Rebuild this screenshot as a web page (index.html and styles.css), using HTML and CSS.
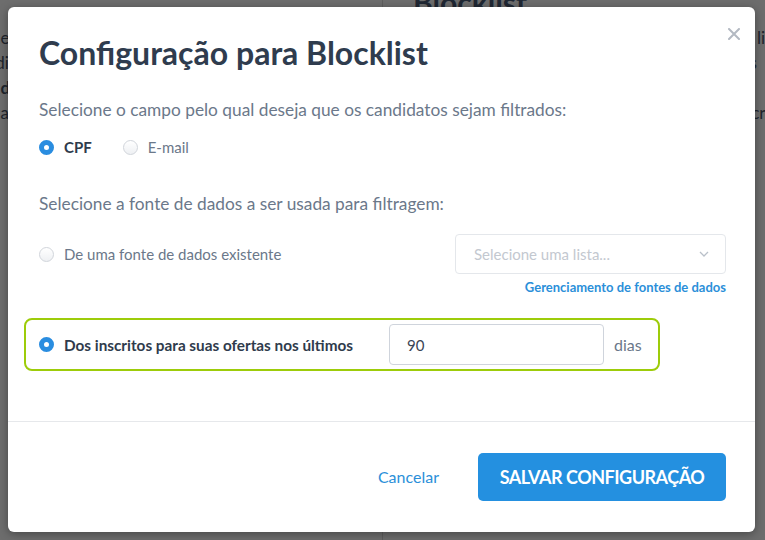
FILE: index.html
```html
<!DOCTYPE html>
<html lang="pt-BR">
<head>
<meta charset="utf-8">
<title>Configuração para Blocklist</title>
<link rel="stylesheet" href="styles.css">
</head>
<body>
<div class="page">
  <div class="page-left">
    <p>Selecione o modelo</p>
    <p>Crie e edite</p>
    <p class="b">Modelo de envio</p>
    <p>Para todas as vagas</p>
  </div>
  <div class="page-right">
    <h2>Blocklist</h2>
    <p>Configurar parâmetros da lista</p>
    <p>Candidatos serão filtrados</p>
    <p class="b">Filtro por regras ativas</p>
    <p>Dos últimos meses de inscrição</p>
  </div>
</div>

<div class="modal">
  <button class="close" aria-label="Fechar">
    <svg width="12" height="12" viewBox="0 0 12 12"><path d="M1 1L11 11M11 1L1 11" stroke="#b3b9c2" stroke-width="2" stroke-linecap="round"/></svg>
  </button>
  <div class="modal-body">
    <h1 class="title">Configuração para Blocklist</h1>

    <p class="lead">Selecione o campo pelo qual deseja que os candidatos sejam filtrados:</p>
    <div class="radio-group">
      <label class="radio checked"><span class="dot"></span><span class="label-text">CPF</span></label>
      <label class="radio"><span class="dot"></span><span class="label-text">E-mail</span></label>
    </div>

    <p class="lead second">Selecione a fonte de dados a ser usada para filtragem:</p>
    <div class="source-row">
      <label class="radio"><span class="dot"></span><span class="label-text">De uma fonte de dados existente</span></label>
      <div class="source-select">
        <div class="select">
          <span class="placeholder">Selecione uma lista...</span>
          <svg class="chevron" width="10" height="6" viewBox="0 0 10 6"><path d="M1 1L5 5L9 1" fill="none" stroke="#b9c0c9" stroke-width="1.3"/></svg>
        </div>
        <a class="manage-link" href="#">Gerenciamento de fontes de dados</a>
      </div>
    </div>

    <div class="highlight">
      <label class="radio checked"><span class="dot"></span><span class="label-text">Dos inscritos para suas ofertas nos últimos</span></label>
      <input class="days-input" type="text" value="90">
      <span class="unit">dias</span>
    </div>
  </div>
  <div class="modal-footer">
    <a class="cancel" href="#">Cancelar</a>
    <button class="save">SALVAR CONFIGURAÇÃO</button>
  </div>
</div>
</body>
</html>
```
FILE: styles.css
```css
* { box-sizing: border-box; }
html, body { margin: 0; padding: 0; }
body {
  width: 765px;
  height: 540px;
  overflow: hidden;
  font-family: Lato, "Noto Sans", sans-serif;
  background: #6d6d6d;
  position: relative;
}

/* dimmed page behind the modal */
.page {
  display: flex;
  height: 540px;
  color: #1e242c;
  font-size: 17px;
}
.page p { margin: 0 0 6px; line-height: 19px; white-space: nowrap; }
.page .b { font-weight: 700; }
.page-left {
  width: 452px;
  margin-left: -70px;
  padding-top: 28px;
  flex-shrink: 0;
}
.page-left p { margin-left: 8px; }
.page-right {
  border-left: 1px solid #5e5e5e;
  padding-left: 30px;
  flex: 1;
}
.page-right h2 {
  margin: -14px 0 10px;
  font-size: 30px;
  line-height: 32px;
  color: #1f2733;
}
.page-right p { margin-left: 150px; }

/* modal */
.modal {
  position: absolute;
  left: 8px;
  top: 7px;
  width: 747px;
  height: 525px;
  background: #fff;
  border-radius: 6px;
  box-shadow: 0 2px 10px rgba(0,0,0,0.35);
  display: flex;
  flex-direction: column;
}
.close {
  position: absolute;
  top: 21px;
  right: 15px;
  width: 12px;
  height: 12px;
  padding: 0;
  border: 0;
  background: none;
  display: flex;
}
.modal-body {
  padding: 27px 29px 0 31px;
  height: 415px;
  border-bottom: 1px solid #e6e8eb;
}
.title {
  margin: 0;
  font-size: 32px;
  line-height: 37px;
  font-weight: 700;
  color: #2f3c4e;
}
.lead {
  margin: 27px 0 0;
  font-size: 17.3px;
  line-height: 24px;
  color: #6b788a;
}
.lead.second { margin-top: 33px; }

.radio-group {
  display: flex;
  gap: 31px;
  margin-top: 13px;
  height: 24px;
  align-items: center;
}
.radio {
  display: flex;
  align-items: center;
  gap: 10px;
  font-size: 15px;
  color: #6b788a;
  white-space: nowrap;
}
.dot {
  width: 15px;
  height: 15px;
  border-radius: 50%;
  border: 1px solid #d1d5db;
  background: linear-gradient(#ffffff, #eef0f3);
  flex-shrink: 0;
}
.radio.checked .dot {
  border: 5px solid #2a8de0;
  background: #fff;
}
.radio.checked .label-text {
  color: #2f3b4c;
  font-weight: 700;
}

.source-row {
  display: flex;
  justify-content: space-between;
  align-items: flex-start;
  margin-top: 18px;
}
.source-row > .radio { height: 40px; }
.source-select {
  width: 271px;
  display: flex;
  flex-direction: column;
  align-items: flex-end;
}
.select {
  width: 100%;
  height: 40px;
  border: 1px solid #e4e7eb;
  border-radius: 4px;
  display: flex;
  align-items: center;
  justify-content: space-between;
  padding: 0 16px 0 18px;
}
.placeholder {
  color: #c3c8d0;
  font-size: 15px;
}
.manage-link {
  margin-top: 5px;
  font-size: 13px;
  line-height: 16px;
  font-weight: 700;
  color: #2b8fd9;
  text-decoration: none;
}

.highlight {
  margin: 23px 0 0 -15px;
  width: 636px;
  height: 53px;
  border: 2px solid #9dcc0a;
  border-radius: 8px;
  display: flex;
  align-items: center;
  padding: 0 15px 0 13px;
}
.highlight .radio { width: 350px; font-size: 15.3px; }
.days-input {
  width: 215px;
  height: 41px;
  border: 1px solid #cfd4dc;
  border-radius: 4px;
  padding: 0 17px;
  font-family: inherit;
  font-size: 15px;
  color: #3a4556;
  outline: none;
}
.unit {
  margin-left: 10px;
  font-size: 16px;
  color: #6b788a;
}

.modal-footer {
  flex: 1;
  display: flex;
  justify-content: flex-end;
  align-items: center;
  gap: 39px;
  padding: 0 29px 1px 0;
}
.cancel {
  font-size: 16px;
  color: #2b8fd9;
  text-decoration: none;
}
.save {
  width: 248px;
  height: 48px;
  border: 0;
  border-radius: 5px;
  background: #2490e0;
  color: #fff;
  font-family: inherit;
  font-size: 18px;
  letter-spacing: -0.5px;
  font-weight: 700;
  padding: 0;
}
```
